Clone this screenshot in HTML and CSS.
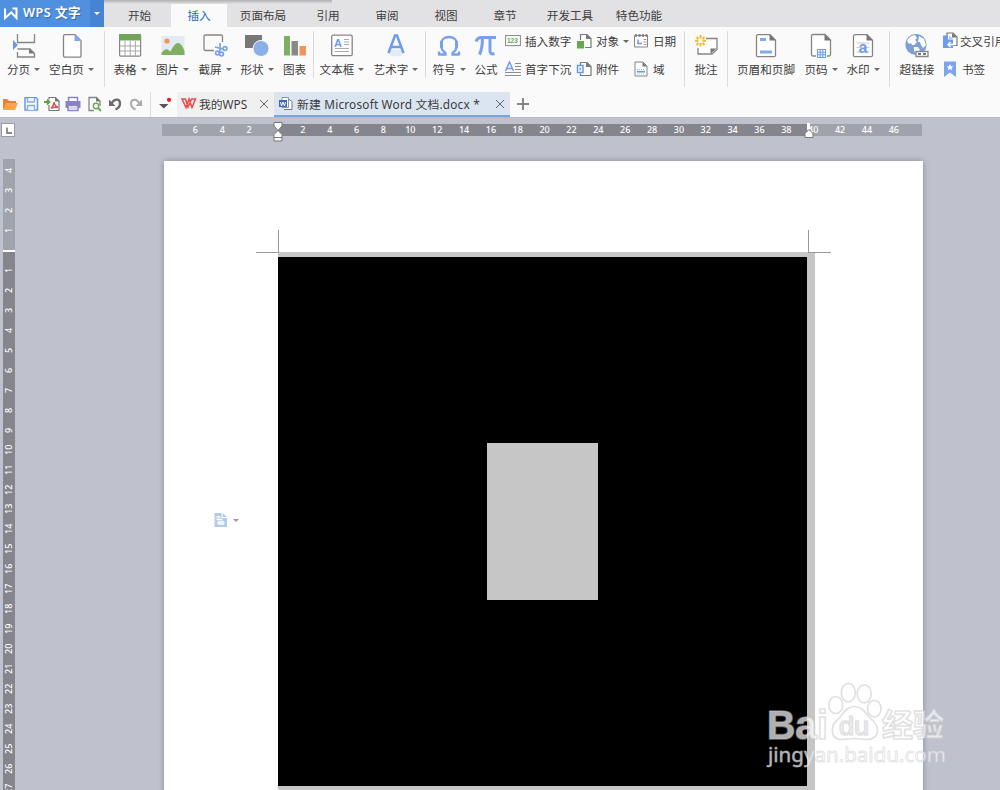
FILE: index.html
```html
<!DOCTYPE html>
<html lang="zh-CN">
<head>
<meta charset="utf-8">
<title>WPS 文字</title>
<link rel="stylesheet" href="styles.css">
</head>
<body>
<div class="app">
  <header class="titlebar">
    <div class="brand">
      <svg class="brand-mark" width="15" height="13" viewBox="0 0 15 13"><path d="M1 1.500V11L7.300 5.500 12.500 11V1.500H8.500" fill="none" stroke="#fff" stroke-width="2"/></svg>
      <span class="brand-name">WPS 文字</span>
      <span class="brand-menu"><i class="caret white"></i></span>
    </div>
    <nav class="tabs">
      <a class="tab w63">开始</a><a class="tab w56 current">插入</a><a class="tab w72">页面布局</a><a class="tab w58">引用</a><a class="tab w60">审阅</a><a class="tab w58">视图</a><a class="tab w60">章节</a><a class="tab w70">开发工具</a><a class="tab w68">特色功能</a>
    </nav>
  </header>

  <section class="ribbon">
    <div class="group g-page">
      <div class="tool w47"><svg width="24" height="26"><g fill="none" stroke="#858585" stroke-width="1.3"><path d="M5.500 1v8.500h17V1M5.500 19v5h17v-3.500l-4.500-4.500H5.500"/></g><path d="M1 7v10l5-5z" fill="#6b97ea"/><path d="M17 15.500v5h5.500z" fill="#777"/></svg><span>分页<i class="caret"></i></span></div>
      <div class="tool w49"><svg width="24" height="26"><path d="M5 1.700h10l6 6v15a1.500 1.500 0 0 1-1.500 1.500H5a1.500 1.500 0 0 1-1.500-1.500V3.200A1.500 1.500 0 0 1 5 1.700z" fill="#fff" stroke="#858585" stroke-width="1.300"/><path d="M14.500 1v7H21.500z" fill="#7fa8ee"/></svg><span>空白页<i class="caret"></i></span></div>
    </div>
    <div class="group g-media">
      <div class="tool w42"><svg width="24" height="26"><rect x="1.600" y="1.600" width="21" height="21.500" rx="1" fill="#fff" stroke="#858585" stroke-width="1.200"/><path d="M1 1h22v6.500H1z" fill="#6fa45a"/><path d="M7 8v15M12.200 8v15M17.300 8v15M2 13h20M2 18h20" stroke="#a7a7a7"/></svg><span>表格<i class="caret"></i></span></div>
      <div class="tool w43"><svg width="24" height="26"><path d="M.5 3h23v19H.5z" fill="#e3ebf2"/><circle cx="6" cy="8" r="2.600" fill="#f0945a"/><path d="M.5 22v-2q4-6 7.500-2.500l1.500 1q4-8.500 7.500-8.500t6.500 8v4z" fill="#7fb061"/></svg><span>图片<i class="caret"></i></span></div>
      <div class="tool w42"><svg width="24" height="26"><path d="M11 17.500H2.500a1.500 1.500 0 0 1-1.500-1.500V3.500A1.500 1.500 0 0 1 2.500 2H18a1.500 1.500 0 0 1 1.500 1.500V9" fill="none" stroke="#858585" stroke-width="1.300"/><g fill="none" stroke="#7ba3ec" stroke-width="1.700"><path d="M17 10v7l-1 3M12 14l8 2"/><circle cx="14.500" cy="20" r="1.900"/><circle cx="18.500" cy="21" r="1.900"/><circle cx="22" cy="15.500" r="1.900"/></g></svg><span>截屏<i class="caret"></i></span></div>
      <div class="tool w42"><svg width="24" height="26"><path d="M0 2h17v13H0z" fill="#777"/><circle cx="16" cy="15.500" r="8" fill="#8bb0e8" stroke="#fafafa"/></svg><span>形状<i class="caret"></i></span></div>
      <div class="tool w33"><svg width="24" height="26"><path d="M1 3h6v19.500H1z" fill="#7fb061"/><path d="M8.500 8h6.500v14.500H8.500z" fill="#888"/><path d="M16.500 13h6.500v9.500h-6.500z" fill="#f0945a"/></svg><span>图表</span></div>
    </div>
    <div class="group g-text">
      <div class="tool w54"><svg width="24" height="26"><rect x="1.700" y="2.200" width="20.500" height="20.500" rx="1.500" fill="#fff" stroke="#858585" stroke-width="1.300"/><text x="4" y="13.500" class="ico-a" font-size="11">A</text><path d="M14 6.500h5M14 9h5M14 11.500h5M5 15.500h14M5 18.500h14" stroke="#aaa"/></svg><span>文本框<i class="caret"></i></span></div>
      <div class="tool w54"><svg width="24" height="26"><ellipse cx="12" cy="20" rx="7.500" ry="3.500" fill="#e3ecfb"/><path d="M4.500 20 11 2.500h2l6.500 17.500M7 14h10" fill="none" stroke="#709aec" stroke-width="2.500"/></svg><span>艺术字<i class="caret"></i></span></div>
    </div>
    <div class="group g-symbol">
      <div class="tool w40"><svg width="24" height="26"><path d="M2 21.500h6.500v-1.500Q4 17 4 11.500C4 6.500 7.500 4 12 4s8 2.500 8 7.500Q20 17 15.500 20v1.500H22M2 18.500v4M22 18.500v4" fill="none" stroke="#78a1ec" stroke-width="2.300"/><path d="M4.500 8v7M19.500 8v7" stroke="#78a1ec" stroke-width="3"/></svg><span>符号<i class="caret"></i></span></div>
      <div class="tool w34"><svg width="24" height="26"><path d="M2 8.500Q3.500 4.500 7 4.500H22M8.500 5q0 10-3 16.500M16 5v13q0 4 4.500 2.500" fill="none" stroke="#78a1ec" stroke-width="3"/></svg><span>公式</span></div>
      <div class="stack c72">
        <div class="mini"><svg width="16" height="16"><rect x=".6" y="2.600" width="14.800" height="10" fill="#fff" stroke="#858585"/><text x="2" y="10" class="ico-n">123</text></svg>插入数字</div>
        <div class="mini"><svg width="16" height="16"><path d="M.5 10 4.500 1l4 9M2 7.500h5" fill="none" stroke="#729cec" stroke-width="1.500"/><path d="M10 2.500h6M10 5.500h6M10 8.500h6M0 11.500h16M0 14.500h16" stroke="#8d8d8d" stroke-width="1.200"/></svg>首字下沉</div>
      </div>
      <div class="stack c56">
        <div class="mini"><svg width="15" height="16"><path d="M3.500 7V1.500h6.500l4 4v9H8" fill="#fff" stroke="#777" stroke-width="1.200"/><path d="M9 1v5h5.500z" fill="#777"/><path d="M0 8h7v7.500H0z" fill="#66a850"/></svg>对象<i class="caret"></i></div>
        <div class="mini"><svg width="15" height="16"><path d="M3.500 5V1.500h6.500l4 4v9H3.500v-2" fill="#fff" stroke="#777" stroke-width="1.200"/><path d="M9 1v5h5.500z" fill="#777"/><path d="M.5 4.500H6v7H.5z" fill="#fff" stroke="#6b97ea" stroke-width="1.500"/><path d="m2.500 6 2 2-2 2z" fill="#6b97ea"/></svg>附件</div>
      </div>
      <div class="stack c50">
        <div class="mini"><svg width="16" height="16"><path d="M1.500 2.500h13v11.500h-13z" fill="#fff" stroke="#858585"/><path d="M2 2.500h12.500" stroke="#777" stroke-width="2.600" stroke-dasharray="2 1.500"/><path d="M5 6.500v4h4" fill="none" stroke="#6b97ea" stroke-width="1.500"/><path d="M10.500 6.500h3M10.500 9h3M10.500 11.500h3" stroke="#999"/></svg>日期</div>
        <div class="mini"><svg width="16" height="16"><path d="M2 1h8l4 4v10H2z" fill="#fff" stroke="#858585"/><path d="M9.500 1v4.500H14z" fill="#777"/><path d="M4 8.500h8M4 13h8" stroke="#9bb9ee" stroke-dasharray="1 1"/><path d="M4 10.700h8" stroke="#6b97ea" stroke-width="1.700"/></svg>域</div>
      </div>
    </div>
    <div class="group g-note">
      <div class="tool w36"><svg width="24" height="26"><path d="M12 5.500h11v11L18 21H4v-6" fill="#fff" stroke="#858585" stroke-width="1.300"/><path d="M16.500 15.500h6L16.500 21z" fill="#777"/><g stroke="#f7b733" stroke-width="2"><path d="M6.500 2v3.500M6.500 10v3.500M1 7.800h3.500M8.500 7.800H12M2.500 4l2 2M8.500 10l2 2M2.500 12l2-2M8.500 6l2-2"/></g></svg><span>批注</span></div>
    </div>
    <div class="group g-header">
      <div class="tool w68"><svg width="24" height="26"><path d="M4 1.700h12l5.500 5.500v15a1.500 1.500 0 0 1-1.500 1.500H4a1.500 1.500 0 0 1-1.500-1.500v-19A1.500 1.500 0 0 1 4 1.700z" fill="#fff" stroke="#858585" stroke-width="1.300"/><path d="M15.500 1v6.500H22z" fill="#777"/><path d="M6 6.500h6M6 19h12" stroke="#81a9ee" stroke-width="2.800"/></svg><span>页眉和页脚</span></div>
      <div class="tool w42"><svg width="24" height="26"><path d="M7 23H4a1.500 1.500 0 0 1-1.500-1.500V3A1.500 1.500 0 0 1 4 1.500h12L21.500 7v14.500A1.500 1.500 0 0 1 20 23h-2" fill="#fff" stroke="#858585" stroke-width="1.300"/><path d="M15.500 1v6.500H22z" fill="#777"/><path d="M8.500 16.500h8v8h-8zM11.200 16v9M13.800 16v9M8 19.200h9M8 21.800h9" fill="none" stroke="#6f9aec" stroke-width="1.100"/></svg><span>页码<i class="caret"></i></span></div>
      <div class="tool w42"><svg width="24" height="26"><path d="M4 1.700h12l5.500 5.500v15a1.500 1.500 0 0 1-1.500 1.500H4a1.500 1.500 0 0 1-1.500-1.500v-19A1.500 1.500 0 0 1 4 1.700z" fill="#fff" stroke="#858585" stroke-width="1.300"/><path d="M15.500 1v6.500H22z" fill="#777"/><path d="M5.500 10h13M5.500 14.500h13M5.500 19h13" stroke="#c9c9c9"/><text x="7.500" y="20" class="ico-a" font-size="16">a</text></svg><span>水印<i class="caret"></i></span></div>
    </div>
    <div class="group g-link">
      <div class="tool w46"><svg width="24" height="26"><circle cx="11" cy="11.500" r="10.600" fill="#7c9fd8"/><path d="M2 8q2-5 8-6l2 3-2 2 2 2-3 3-2 0-1-2-2 1zM14 3l5 3 2 6-3 3-2-3-1-3-2 0zM9 14l4 0 2 3-3 4-3-3z" fill="#fff"/><path d="M11 18.500h12v5H11z" fill="#fff" stroke="#888" stroke-width="1.300"/><path d="M13 21h3M18 21h3" stroke="#777" stroke-width="2"/></svg><span>超链接</span></div>
      <div class="stack c72 refs">
        <div class="mini"><svg width="16" height="18"><path d="M5 4V1h6l4 4v8.500H9" fill="#fff" stroke="#777" stroke-width="1.200"/><path d="M10 1v4.500h5z" fill="#777"/><path d="M1 3.500h5v4h5v8.500H1z" fill="#6f9cec"/><path d="M7 3.500 11 7H7z" fill="#a9c4f4"/><path d="M12.500 9v3.500H6m2.500-2.500L6 12.500 8.500 15" fill="none" stroke="#fff" stroke-width="1.500"/></svg><b>交叉引用</b></div>
        <div class="mini mark"><svg width="16" height="18"><path d="M2 1.500h12v15.500l-6-4.500-6 4.500z" fill="#7ba4f0"/><path d="m8 4 1 2.200 2.300.2-1.800 1.500.6 2.300L8 9l-2.100 1.200.6-2.300-1.800-1.500L7 6.200z" fill="#fff"/></svg>书签</div>
      </div>
    </div>
  </section>

  <section class="docbar">
    <div class="quick">
      <svg width="16" height="16"><path d="M1 13V3h4l2 2h7v3" fill="#e8832c"/><path d="M1 14 4 7h12l-3 7z" fill="#f7a54c"/></svg>
      <svg width="16" height="16"><path d="M2 1.700h11l1.500 1.500V14H2z" fill="#fff" stroke="#6b97ea" stroke-width="1.500"/><path d="M4.500 2v4h7V2M4.500 14V9.500h7V14" fill="#eef4fe" stroke="#82a9ee" stroke-width="1.300"/></svg>
      <svg width="16" height="16"><path d="M5 3.500V1.500h6.500l3.500 3.500v9.500H5V9" fill="#fff" stroke="#777" stroke-width="1.200"/><path d="M11 1v4.500h4.500z" fill="#777"/><path d="M0 6h5m-2-2.500L5.500 6 3 8.500" fill="none" stroke="#62a04d" stroke-width="1.800"/><path d="M7 12.500q3-3 3-6.500 0 3 4 5.500-4-1-7 1z" fill="none" stroke="#dd5252" stroke-width="1.500"/></svg>
      <svg width="16" height="16"><path d="M3.500 1.500h9V6h-9z" fill="#fff" stroke="#8883c4" stroke-width="1.500"/><path d="M.5 5h15v7H.5z" fill="#8883c4"/><path d="M3 9.500h10v5H3z" fill="#fff" stroke="#8883c4" stroke-width="1.500"/><path d="M4 12h8" stroke="#aaa6d8"/></svg>
      <svg width="16" height="16"><path d="M8 14.500H3v-13h7.500L14 5v5" fill="#fff" stroke="#858585" stroke-width="1.300"/><path d="M10 1v4.500h4.500z" fill="#777"/><circle cx="10" cy="10" r="2.700" fill="#fff" stroke="#66a850" stroke-width="1.400"/><path d="m12 12 3 3" stroke="#66a850" stroke-width="1.800"/></svg>
      <svg width="16" height="16"><path d="M4.500 8C7 2 13 2.500 13 7.500q0 4-4.500 6" fill="none" stroke="#6b6b6b" stroke-width="2.300"/><path d="M2 3.500v6.500h6.500z" fill="#6b6b6b"/></svg>
      <svg width="16" height="16"><path d="M11.500 8C9 2 3 2.500 3 7.500q0 4 4.500 6" fill="none" stroke="#aaa" stroke-width="2"/><path d="M14 3.500v6.500H7.500z" fill="#aaa"/></svg>
    </div>
    <div class="more"><svg width="14" height="14"><path d="M1 7h9.500l-4.700 4.500z" fill="#555"/><circle cx="11" cy="2.800" r="2.100" fill="#f01c1c"/></svg></div>
    <div class="doc home"><svg width="16" height="13"><path d="M1 2h3.500l2.500 8 3.500-8h4L11 10.500 8 2 5 10.500z" fill="none" stroke="#e84a4a" stroke-width="1.500"/></svg><span class="doc-name">我的WPS</span><i class="close"></i></div>
    <div class="doc open"><svg width="14" height="14"><path d="M6 2.500h4l3 2v8H5" fill="#fff" stroke="#777"/><path d="M3 .5h6.500v10H3z" fill="#fff" stroke="#8b93a8"/><path d="M0 3h8v7H0z" fill="#4267b8"/><path d="m1.500 5 1 4 1.500-4 1.500 4 1-4" fill="none" stroke="#fff"/></svg><span class="doc-name">新建 Microsoft Word 文档.docx *</span><i class="close"></i></div>
    <div class="plus"></div>
  </section>

  <main class="workspace">
    <div class="tabstop"><svg width="14" height="14"><rect x=".5" y=".5" width="13" height="13" fill="#fff" stroke="#999ba3"/><path d="M6 4.500V10h5" fill="none" stroke="#888" stroke-width="1.800"/></svg></div>
    <div class="hruler">
      <span>6</span><span>4</span><span>2</span><span></span><span>2</span><span>4</span><span>6</span><span>8</span><span>10</span><span>12</span><span>14</span><span>16</span><span>18</span><span>20</span><span>22</span><span>24</span><span>26</span><span>28</span><span>30</span><span>32</span><span>34</span><span>36</span><span>38</span><span>40</span><span>42</span><span>44</span><span>46</span>
      <svg class="indent left" width="10" height="22"><path d="M1 1.500h8v3.500L5 9.500l4 4v6.500H1v-6.500l4-4L1 5z" fill="#fff" stroke="#777"/><path d="M1 16.500h8" stroke="#777"/></svg>
      <svg class="indent right" width="10" height="16"><path d="M3 0h3v7H3z" fill="#fff"/><path d="m5 6.500 4 4v4H1v-4z" fill="#fff" stroke="#777"/></svg>
    </div>
    <div class="vruler">
      <span>4</span><span>3</span><span>2</span><span>1</span><span></span><span>1</span><span>2</span><span>3</span><span>4</span><span>5</span><span>6</span><span>7</span><span>8</span><span>9</span><span>10</span><span>11</span><span>12</span><span>13</span><span>14</span><span>15</span><span>16</span><span>17</span><span>18</span><span>19</span><span>20</span><span>21</span><span>22</span><span>23</span><span>24</span><span>25</span><span>26</span><span>27</span>
    </div>
    <article class="page">
      <i class="crop nw"></i><i class="crop ne"></i>
      <div class="paste"><svg width="14" height="16"><path d="M.5 1h8L13 5v10H.5z" fill="#b4cae9"/><path d="M8 1v4.500h5" fill="none" stroke="#fff"/><path d="M2.500 5h4M2.500 7.500h6M3 11h7.500" stroke="#fff" stroke-width="1.300"/><path d="M4 9h6v4H4z" fill="#edf3fb"/></svg><i class="caret faint"></i></div>
      <div class="picture"><div class="black"><div class="swatch"></div></div></div>
    </article>
  </main>
  <svg class="watermark" width="200" height="110" viewBox="760 675 200 110">
    <g class="wm">
      <text x="767" y="738.500" font-size="40" font-weight="bold" textLength="61" lengthAdjust="spacingAndGlyphs">Bai</text>
      <ellipse cx="835.700" cy="705" rx="7" ry="8.500"/><ellipse cx="848.300" cy="692.700" rx="7" ry="9.300"/><ellipse cx="864.200" cy="693.800" rx="7" ry="9"/><ellipse cx="874.300" cy="708.700" rx="6.800" ry="8.300"/>
      <path d="M854.500 706.500c7 0 10 5 14 10 4 4 9 7 9 13 0 8-5 10-11 10-5 0-7-1-12-1s-8 1-13 1c-6 0-10-4-9-11 0-6 5-8 8-12 4-5 7-10 14-10z"/>
      <text x="839" y="734.500" font-size="25" textLength="30" lengthAdjust="spacingAndGlyphs">du</text>
      <text class="cjk" x="882" y="736" font-size="31" textLength="62" lengthAdjust="spacingAndGlyphs">经验</text>
      <text class="url" x="768" y="761.500" font-size="19.500" textLength="178" lengthAdjust="spacingAndGlyphs">jingyan.baidu.com</text>
    </g>
  </svg>
</div>
</body>
</html>
```

FILE: styles.css
```css
* { box-sizing: border-box; }
body { margin: 0; overflow: hidden; font-family: "Noto Sans CJK SC", sans-serif; font-size: 11.6px; color: #3c3c3c; }
.app { position: relative; width: 1000px; height: 790px; display: flex; flex-direction: column; overflow: hidden; background: #bfc2cc; }
svg { display: block; flex: none; overflow: visible; }

.titlebar { height: 27px; flex: none; display: flex; background: linear-gradient(#b0b0b2, #e2e2e4 4px) 0 0 / 332px 27px no-repeat #e2e2e4; }
.brand { width: 104px; display: flex; align-items: center; background: #4f91df; color: #fff; }
.brand-mark { margin-left: 4px; }
.brand-name { flex: 1; margin-left: 4px; font-family: "Noto Sans", "Noto Sans CJK SC", sans-serif; font-size: 12.6px; font-weight: 600; letter-spacing: .5px; line-height: 26px; height: 27px; white-space: nowrap; text-shadow: 1px 1px 1px #3467a8; }
.brand-menu { width: 14px; height: 27px; display: flex; align-items: center; justify-content: center; background: #4484d3; }
.tabs { display: flex; align-items: flex-end; margin-left: 4px; }
.tab { height: 23px; line-height: 23px; text-align: center; white-space: nowrap; }
.tab.current { background: #fafafa; color: #2469b8; }

.caret { display: inline-block; flex: none; width: 0; height: 0; margin-left: 4px; vertical-align: 3px; border: solid transparent; border-width: 3px 3px 0; border-top-color: #666; }
.caret.white { margin: 0; border-top-color: #fff; }
.caret.faint { margin-left: 5px; border-top-color: #999; }

.ribbon { height: 65px; flex: none; display: flex; background: #fafafa; }
.group { display: flex; flex: none; height: 56px; margin-top: 4px; border-right: 1px solid #dcdcdc; }
.g-page { width: 105px; }
.g-media { width: 209px; padding-left: 4px; height: 47px; }
.g-text { width: 112px; padding-left: 1px; height: 47px; }
.g-symbol { width: 259px; padding-left: 3px; }
.g-note { width: 43px; padding-left: 3px; }
.g-header { width: 162px; padding-left: 4px; }
.g-link { width: 110px; padding-left: 4px; border: 0; }
.tool { display: flex; flex: none; flex-direction: column; align-items: center; padding-top: 2px; }
.tool span { height: 17px; line-height: 17px; margin-top: 2px; white-space: nowrap; }
.stack { display: flex; flex: none; flex-direction: column; margin-top: -4px; }
.g-symbol .c72 { margin-left: 2px; }
.mini { height: 28px; display: flex; align-items: center; gap: 4px; white-space: nowrap; }
.mini .caret { margin-left: 0; }
.mini b { font-weight: 400; }
.refs { margin-left: 2px; }
.refs .mini { gap: 2px; }
.refs .mark { gap: 4px; }
.ico-a { font-family: "Liberation Sans", sans-serif; font-weight: bold; fill: #709aec; }
.ico-n { font-family: "Liberation Sans", sans-serif; font-weight: bold; font-size: 6.5px; fill: #66a850; }

.w33 { width: 33px; } .w34 { width: 34px; } .w36 { width: 36px; } .w40 { width: 40px; }
.w42 { width: 42px; } .w43 { width: 43px; } .w46 { width: 46px; } .w47 { width: 47px; }
.w49 { width: 49px; } .w54 { width: 54px; } .w56 { width: 56px; } .w58 { width: 58px; }
.w60 { width: 60px; } .w63 { width: 63px; } .w68 { width: 68px; } .w70 { width: 70px; } .w72 { width: 72px; }
.c72 { width: 72px; } .c56 { width: 56px; } .c50 { width: 50px; }

.docbar { height: 25px; flex: none; display: flex; background: #fafafa; }
.quick { width: 151px; display: flex; align-items: center; gap: 5px; padding: 0 0 1px 2px; border-right: 1px solid #ddd; }
.more { width: 26px; display: flex; align-items: center; padding: 0 0 2px 7px; }
.doc { display: flex; align-items: center; white-space: nowrap; }
.doc-name { flex: 1; font-family: "Noto Sans", "Noto Sans CJK SC", sans-serif; font-size: 11.8px; }
.home { width: 97px; padding: 0 6px 2px 4px; gap: 2px; background: #f0f0f1; }
.open { width: 236px; padding: 0 6px 0 5px; gap: 4px; background: #dbe5f2; border-bottom: 2px solid #7ba4d8; }
.open .doc-name { letter-spacing: .2px; }
.close { width: 8px; height: 8px; margin-top: 1px; background: linear-gradient(45deg, transparent 45%, #666 45% 55%, transparent 55%), linear-gradient(-45deg, transparent 45%, #666 45% 55%, transparent 55%); }
.plus { width: 12px; height: 12px; margin: 6px 0 0 7px; background: linear-gradient(#858585, #858585) center / 12px 2px no-repeat, linear-gradient(#858585, #858585) center / 2px 12px no-repeat; }

.workspace { flex: 1; min-height: 0; display: grid; grid-template-columns: 164px 1fr; grid-template-rows: 44px 1fr; border-top: 1px solid #b8bbc5; }
.tabstop { padding: 5px 0 0 1px; }
.hruler { position: relative; width: 760px; height: 12px; margin: 6px 0 0 -2px; padding-left: 20px; display: flex; background: linear-gradient(90deg, #a1a3ac 115px, #85858e 115px 645px, #a1a3ac 645px); }
.hruler span, .vruler span { color: #fff; font: 500 9px/11px "Noto Sans", sans-serif; text-align: center; }
.hruler span { flex: 0 0 26.86px; }
.indent { position: absolute; }
.indent.left { left: 111px; top: -3px; }
.indent.right { left: 642px; top: -1px; }
.vruler { width: 12px; height: 634px; margin: -3px 0 0 3px; padding-top: 1px; display: flex; flex-direction: column; overflow: hidden; background: linear-gradient(#a1a3ac 91px, #fff 91px 93px, #85858e 93px); }
.vruler span { flex: 0 0 19.97px; width: 12px; line-height: 12px; writing-mode: vertical-rl; transform: rotate(180deg); }

.page { position: relative; width: 759px; height: 640px; padding: 91px 0 0 114px; background: #fff; box-shadow: 0 0 6px #858994; margin-top: -1px; }
.picture { width: 537px; height: 538px; padding: 5px 8px 4px 0; background: #c6c6c6; }
.black { height: 529px; padding: 186px 0 0 209px; background: #000; }
.swatch { width: 111px; height: 157px; background: #c6c6c6; }
.crop { position: absolute; width: 23px; height: 23px; top: 69px; border-bottom: 1px solid #999; }
.crop.nw { left: 92px; border-right: 1px solid #999; }
.crop.ne { left: 644px; border-left: 1px solid #999; }
.paste { position: absolute; left: 50px; top: 351px; display: flex; align-items: center; }
.watermark { position: absolute; left: 760px; top: 675px; }
.wm { fill: #fff; fill-opacity: .7; stroke: #c4c4c8; stroke-opacity: .5; stroke-width: 1.7; stroke-linejoin: round; font-family: "Liberation Sans", sans-serif; }
.wm .cjk { font-family: "Noto Sans CJK SC", sans-serif; font-weight: 700; }
.wm .url { font-family: "Noto Sans", sans-serif; font-weight: 400; stroke-width: .9; }
```
